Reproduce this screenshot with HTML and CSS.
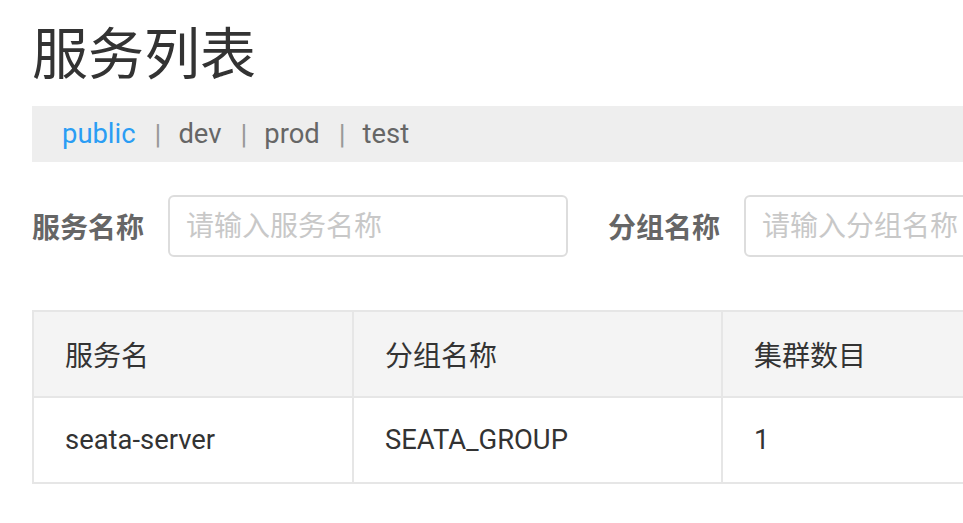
FILE: index.html
```html
<!DOCTYPE html>
<html lang="zh-CN">
<head>
<meta charset="utf-8">
<title>服务列表</title>
<link rel="stylesheet" href="styles.css">
</head>
<body>
<div class="page">
  <h1 class="title">服务列表</h1>
  <div class="tabs">
    <span class="tab active">public</span>
    <span class="sep">|</span>
    <span class="tab">dev</span>
    <span class="sep">|</span>
    <span class="tab">prod</span>
    <span class="sep">|</span>
    <span class="tab">test</span>
  </div>
  <form class="search">
    <label class="field-label">服务名称</label>
    <input class="field-input" type="text" placeholder="请输入服务名称">
    <label class="field-label">分组名称</label>
    <input class="field-input" type="text" placeholder="请输入分组名称">
  </form>
  <table class="grid">
    <colgroup>
      <col class="c1"><col class="c2"><col class="c3">
    </colgroup>
    <thead>
      <tr><th>服务名</th><th>分组名称</th><th>集群数目</th></tr>
    </thead>
    <tbody>
      <tr><td>seata-server</td><td>SEATA_GROUP</td><td>1</td></tr>
    </tbody>
  </table>
</div>
</body>
</html>
```

FILE: styles.css
```css
html, body {
  margin: 0;
  padding: 0;
  overflow: hidden;
  background: #fff;
}
body {
  font-family: Roboto, "Noto Sans CJK SC", "Noto Sans", sans-serif;
  font-size: 28px;
  color: #333;
}
.page {
  width: 1400px;
  padding-left: 32px;
}
.title {
  margin: 0;
  padding-top: 27px;
  height: 79px;
  font-size: 56px;
  font-weight: normal;
  line-height: 56px;
  color: #333;
}
.tabs {
  display: flex;
  align-items: center;
  height: 56px;
  background: #eee;
  padding-left: 30px;
}
.tab {
  color: #666;
  font-size: 27.4px;
}
.tab.active {
  color: #2a9df4;
}
.sep {
  color: #999;
  font-size: 28px;
  margin: 0 17px 0 19px;
}
.search {
  display: flex;
  align-items: center;
  margin-top: 33px;
  height: 62px;
}
.field-label {
  font-weight: bold;
  color: #666;
  margin-right: 24px;
}
.field-input {
  box-sizing: border-box;
  width: 400px;
  height: 62px;
  border: 2px solid #ddd;
  border-radius: 6px;
  padding: 0 16px;
  margin-right: 40px;
  font-family: inherit;
  font-size: 28px;
  color: #333;
  outline: none;
}
.field-input::placeholder {
  color: #c8c8c8;
}
.grid {
  margin-top: 53px;
  border-collapse: collapse;
  width: 1300px;
  table-layout: fixed;
}
.c1 { width: 320px; }
.c2 { width: 369px; }
.grid th, .grid td {
  border: 2px solid #e6e6e6;
  padding: 0 31px;
  height: 84px;
  text-align: left;
  font-weight: normal;
  color: #333;
}
.grid td {
  font-size: 27.4px;
}
.grid th {
  background: #f4f4f4;
}
```
